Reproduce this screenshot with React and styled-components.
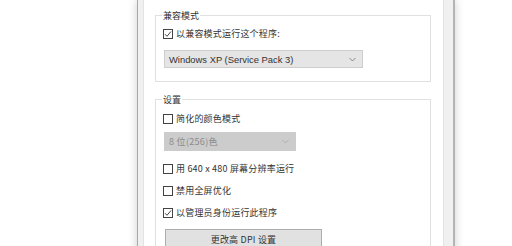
import styled, { createGlobalStyle } from "styled-components";

const GlobalStyle = createGlobalStyle`
  html, body {
    margin: 0;
    padding: 0;
    background: #ffffff;
  }
  body {
    font-family: "Noto Sans CJK SC", "Liberation Sans", sans-serif;
  }
`;

const CheckMark = () => (
  <svg width="8" height="8" viewBox="0 0 8 8">
    <polyline
      points="1,4.2 3,6.3 7,1.5"
      fill="none"
      stroke="#444"
      strokeWidth="1"
    />
  </svg>
);

const Chevron = ({ color }) => (
  <svg width="7" height="5" viewBox="0 0 7 5">
    <polyline points="0.5,1 3.5,4 6.5,1" fill="none" stroke={color} strokeWidth="1" />
  </svg>
);

const CheckRow = ({ checked, text, top }) => (
  <Row $top={top}>
    <Box>{checked && <CheckMark />}</Box>
    <Label>{text}</Label>
  </Row>
);

const App = () => {
  return (
    <Page>
      <GlobalStyle />
      <Window>
        <TabPanel>
          <Group>
            <Legend>兼容模式</Legend>
            <CheckRow checked top={5} text="以兼容模式运行这个程序:" />
            <Select $width={199} $top={10}>
              <SelectText>Windows XP (Service Pack 3)</SelectText>
              <Chevron color="#888" />
            </Select>
          </Group>
          <Group $top={11}>
            <Legend>设置</Legend>
            <CheckRow top={6} text="简化的颜色模式" />
            <Select $width={132} $top={7} $disabled>
              <SelectText $disabled>8 位(256)色</SelectText>
              <Chevron color="#b0b0b0" />
            </Select>
            <CheckRow top={11} text="用 640 x 480 屏幕分辨率运行" />
            <CheckRow top={9} text="禁用全屏优化" />
            <CheckRow checked top={9} text="以管理员身份运行此程序" />
            <Button>更改高 DPI 设置</Button>
          </Group>
        </TabPanel>
      </Window>
    </Page>
  );
};

const Page = styled.div`
  display: flex;
  width: 512px;
  height: 246px;
  overflow: hidden;
  background: #ffffff;
`;

const Window = styled.div`
  display: flex;
  margin-left: 137px;
  width: 318px;
  height: 300px;
  box-sizing: border-box;
  background: #f0f0f0;
  border-left: 1px solid #a8a8a8;
  border-right: 2px solid #b4b4b4;
  box-shadow: 0 0 9px rgba(0, 0, 0, 0.2);
  padding: 0 9px 0 5px;
`;

const TabPanel = styled.div`
  flex: 1;
  display: flex;
  flex-direction: column;
  background: #ffffff;
  border-left: 1px solid #e3e3e3;
  border-right: 1px solid #e3e3e3;
  padding: 9px 12px 0 11px;
`;

const Group = styled.fieldset`
  display: flex;
  flex-direction: column;
  margin: ${(p) => p.$top || 0}px 0 0 0;
  padding: 0 8px 13px 7px;
  border: 1px solid #e0e0e0;
  min-width: 0;
`;

const Legend = styled.legend`
  padding: 0 1px;
  margin-left: -1px;
  font-size: 9px;
  line-height: 13px;
  color: #333;
`;

const Row = styled.div`
  display: flex;
  align-items: center;
  gap: 3px;
  height: 13px;
  margin-top: ${(p) => p.$top}px;
`;

const Box = styled.div`
  display: flex;
  align-items: center;
  justify-content: center;
  width: 10px;
  height: 10px;
  box-sizing: border-box;
  border: 1px solid #444;
  background: #fff;
`;

const Label = styled.span`
  font-size: 9px;
  line-height: 13px;
  letter-spacing: 0.2px;
  color: #333;
  white-space: nowrap;
`;

const Select = styled.div`
  display: flex;
  align-items: center;
  justify-content: space-between;
  box-sizing: border-box;
  width: ${(p) => p.$width}px;
  height: ${(p) => (p.$disabled ? 19 : 18)}px;
  margin-top: ${(p) => p.$top}px;
  margin-left: 1px;
  padding: 0 6px 0 4px;
  background: ${(p) => (p.$disabled ? "#cccccc" : "#e5e5e5")};
  border: 1px solid ${(p) => (p.$disabled ? "#cccccc" : "#cdcdcd")};
`;

const SelectText = styled.span`
  font-family: ${(p) =>
    p.$disabled
      ? `"Noto Sans CJK SC", "Liberation Sans", sans-serif`
      : `"Liberation Sans", "Noto Sans CJK SC", sans-serif`};
  font-size: ${(p) => (p.$disabled ? 9 : 9.4)}px;
  letter-spacing: ${(p) => (p.$disabled ? 0.3 : 0)}px;
  color: ${(p) => (p.$disabled ? "#8a8a8a" : "#333")};
  white-space: nowrap;
`;

const Button = styled.div`
  display: flex;
  align-items: center;
  justify-content: center;
  box-sizing: border-box;
  width: 157px;
  height: 21px;
  margin-top: 10px;
  margin-left: 2px;
  background: #e1e1e1;
  border: 1px solid #adadad;
  font-size: 9px;
  letter-spacing: 0.2px;
  color: #333;
`;

export default App;
